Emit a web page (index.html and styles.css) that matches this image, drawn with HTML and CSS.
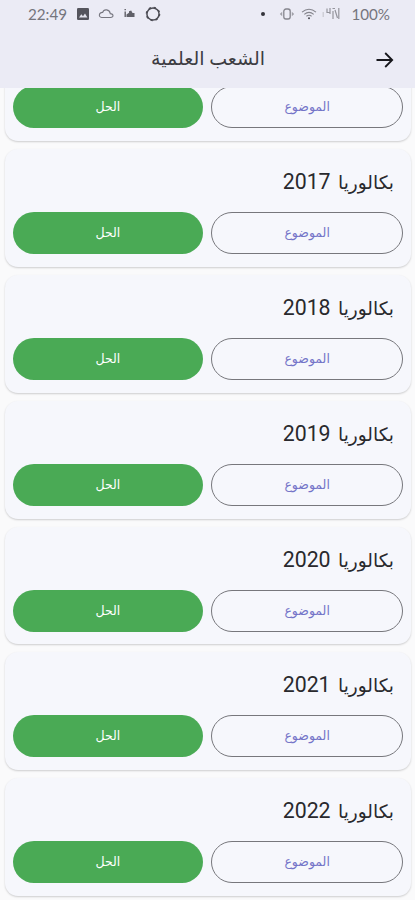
FILE: index.html
```html
<!DOCTYPE html>
<html lang="ar" dir="rtl">
<head>
<meta charset="utf-8">
<title>الشعب العلمية</title>
<link rel="stylesheet" href="styles.css">
</head>
<body>
<div class="screen">
<header class="top">
  <div class="status" dir="ltr">
    <span class="clock">22:49</span>
    <svg class="s-image" width="12" height="12" viewBox="0 0 12 12"><rect width="12" height="12" rx="1.3" fill="#55555d"/><path d="M2 9.5 4.3 6.3 6 8.2 8 5.4 10.4 9.5Z" fill="#e4e4ed"/></svg>
    <svg class="s-cloud" width="16" height="11" viewBox="0 0 16 11" fill="none" stroke="#777780" stroke-width="1.1"><path d="M3.7 9.5H12.5C16 9.5 15.7 5.7 12.3 5.6 11.6 1.2 5.8.5 4.7 4.4 1.1 4.2-.1 9 3.7 9.5Z"/></svg>
    <svg class="s-chart" width="11" height="9" viewBox="0 0 11 9" fill="#606068"><path d="M.5 0h1.4v1.3H.5zM.5 2.5h1.4V8H.5zM2.5 5.5 5 3.8V2.2L7.2 1.5 8.5 4H10.5V8H2.5Z"/></svg>
    <svg class="s-ring" width="16" height="16" viewBox="0 0 16 16" fill="none" stroke="#4c4c54"><circle cx="8" cy="8" r="6.1" stroke-width="1.5"/><circle cx="8" cy="8" r="6.5" stroke-width="1.6" stroke-dasharray="2.2 2.9"/></svg>
    <span class="spacer"></span>
    <span class="dot"></span>
    <svg class="s-vibrate" width="16" height="12" viewBox="0 0 16 12" fill="none" stroke="#85858d" stroke-width="1.3"><rect x="4.8" y="1" width="6.4" height="10" rx="2.2"/><path d="M3.2 3.8.8 6l2.4 2.2ZM12.8 3.8 15.2 6l-2.4 2.2Z" fill="#a0a0a8" stroke="none"/></svg>
    <svg class="s-wifi" width="16" height="12" viewBox="0 0 16 12" fill="none" stroke="#85858d" stroke-width="1.1"><path d="M1 4.2Q8-1.6 15 4.2M3.3 6.3Q8 2.4 12.7 6.3M5.4 8.3Q8 6.2 10.6 8.3"/><circle cx="8" cy="10.3" r="1" fill="#4c4c54" stroke="none"/></svg>
    <svg class="s-signal" width="18" height="13" viewBox="0 0 18 13" fill="none" stroke="#94949c" stroke-width="1.2"><path d="M1.2 5v5" stroke="#c8c8d0"/><path d="M5 1.5v4h3M8 1v6M10.5 1.5h2.5M11 4v8M13 3l2.5 8M16.8 1v11"/></svg>
    <span class="battery">100%</span>
  </div>
  <div class="appbar">
    <svg class="arrow" width="18" height="16" viewBox="0 0 18 16" fill="none" stroke="#17171c" stroke-width="1.8"><path d="M.5 8H16M9.2 1 16.2 8 9.2 15"/></svg>
    <h1>الشعب العلمية</h1>
  </div>
</header>
<main class="list">
  <section class="card partial"><div class="row"><button class="btn outline">الموضوع</button><button class="btn solid">الحل</button></div></section>
  <section class="card"><h2><span class="word">بكالوريا</span> <span class="year">2017</span></h2><div class="row"><button class="btn outline">الموضوع</button><button class="btn solid">الحل</button></div></section>
  <section class="card"><h2><span class="word">بكالوريا</span> <span class="year">2018</span></h2><div class="row"><button class="btn outline">الموضوع</button><button class="btn solid">الحل</button></div></section>
  <section class="card"><h2><span class="word">بكالوريا</span> <span class="year">2019</span></h2><div class="row"><button class="btn outline">الموضوع</button><button class="btn solid">الحل</button></div></section>
  <section class="card"><h2><span class="word">بكالوريا</span> <span class="year">2020</span></h2><div class="row"><button class="btn outline">الموضوع</button><button class="btn solid">الحل</button></div></section>
  <section class="card"><h2><span class="word">بكالوريا</span> <span class="year">2021</span></h2><div class="row"><button class="btn outline">الموضوع</button><button class="btn solid">الحل</button></div></section>
  <section class="card"><h2><span class="word">بكالوريا</span> <span class="year">2022</span></h2><div class="row"><button class="btn outline">الموضوع</button><button class="btn solid">الحل</button></div></section>
</main>
</div>
</body>
</html>
```
FILE: styles.css
```css
* { box-sizing: border-box; }
body { margin: 0; background: #fafafb; font-family: Roboto, "DejaVu Sans", sans-serif; }
.screen { width: 415px; height: 900px; overflow: hidden; display: flex; flex-direction: column; }
.top { height: 88px; flex: none; background: #ebebf5; }
.status { height: 28px; display: flex; align-items: center; padding: 0 25px 0 28px; color: #75757d; font: 15.2px/27px Lato, sans-serif; }
.status svg, .dot { margin-bottom: 1px; }
.s-image { margin-left: 10px; }
.s-cloud { margin-left: 9px; }
.s-chart { margin-left: 10px; }
.s-ring { margin-left: 10px; }
.spacer { flex: 1; }
.dot { width: 4px; height: 4px; border-radius: 50%; background: #33333a; margin-right: 14px; }
.s-wifi { margin-left: 6px; }
.s-signal { margin-left: 5px; }
.battery { margin-left: 11px; }
.appbar { height: 60px; display: flex; align-items: center; padding-right: 21px; }
.arrow { margin-top: 3px; }
h1 { margin: 1px 111px 0 0; font-size: 19px; font-weight: 400; color: #3c3c42; width: 114px; white-space: nowrap; }
.list { flex: 1; overflow: hidden; display: flex; flex-direction: column; justify-content: flex-end; gap: 8px; padding: 0 4px 4px 5px; }
.card { flex: none; height: 117.8px; border-radius: 13px; background: #f6f7fc; box-shadow: 0 1px 2px rgba(0,0,0,.18); padding: 18px 8px 0; }
.partial { height: 55px; padding-top: 0; border-radius: 0 0 13px 13px; }
h2 { margin: 0; height: 45px; padding-right: 9px; display: flex; align-items: baseline; gap: 7.5px; font-weight: 400; color: #29292d; line-height: 30px; }
.word { font-size: 18.5px; }
.year { font-size: 21.3px; }
.row { display: flex; gap: 8.5px; }
.btn { flex: 1; height: 42px; border-radius: 21px; border: 0; padding: 0; font: 12.5px/20px "DejaVu Sans", sans-serif; }
.outline { background: transparent; border: 1.2px solid #77777c; color: #7474c8; }
.solid { background: #4aaa55; color: #fff; }
```
